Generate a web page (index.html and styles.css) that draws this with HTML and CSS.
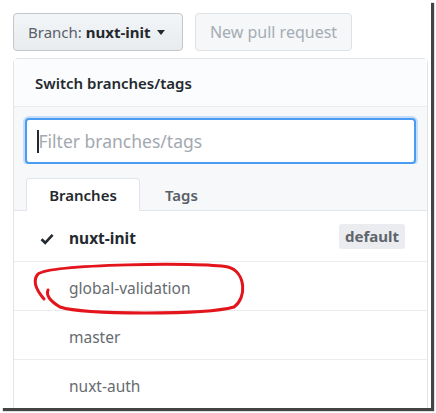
FILE: index.html
```html
<!DOCTYPE html>
<html>
<head>
<meta charset="utf-8">
<link rel="stylesheet" href="styles.css">
</head>
<body>
<div class="frame">
  <div class="toolbar">
    <button class="btn branch-btn"><span class="lbl">Branch:</span> <span class="cur">nuxt-init</span><span class="caret"></span></button>
    <button class="btn disabled">New pull request</button>
  </div>
  <div class="dropdown">
    <div class="dd-header">Switch branches/tags</div>
    <div class="dd-filter">
      <div class="input"><span class="cursor"></span><span class="ph">Filter branches/tags</span></div>
    </div>
    <div class="tabs">
      <div class="tab active">Branches</div>
      <div class="tab">Tags</div>
    </div>
    <ul class="list">
      <li class="item selected">
        <svg class="check" width="14" height="12" viewBox="0 0 14 12"><path d="M1.5 6.2 L5.2 9.8 L12.6 1.8" fill="none" stroke="#24292e" stroke-width="2.6"/></svg>
        <span class="name">nuxt-init</span>
        <span class="badge">default</span>
      </li>
      <li class="item"><span class="name">global-validation</span></li>
      <li class="item"><span class="name">master</span></li>
      <li class="item"><span class="name">nuxt-auth</span></li>
    </ul>
  </div>
  <svg class="scribble" width="436" height="413" viewBox="0 0 436 413">
    <path d="M44 299 C 38 292, 31 282, 38 274 C 52 264, 200 262, 228 267 C 246 272, 247 298, 234 307 C 205 315, 85 315, 60 307 C 50 301, 46 295, 48 290" fill="none" stroke="#e3141b" stroke-width="3" stroke-linecap="round"/>
  </svg>
</div>
</body>
</html>
```

FILE: styles.css
```css
* { box-sizing: border-box; }
html, body { margin: 0; padding: 0; background: #fff; }
body {
  font-family: "Noto Sans", "Open Sans", sans-serif;
  color: #24292e;
  width: 436px;
  height: 413px;
  overflow: hidden;
}
.frame {
  position: relative;
  width: 431px;
  height: 408px;
  padding: 13px 0 0 13px;
  box-shadow: 3px 3px 1px #444;
  overflow: hidden;
  background: #fff;
}
.toolbar {
  display: flex;
  gap: 12px;
  height: 38px;
}
.btn {
  font-family: inherit;
  font-size: 15px;
  height: 38px;
  border-radius: 4px;
  border: 1px solid #c4c7ca;
  background: linear-gradient(#f3f5f7, #e8ecef);
  padding: 0 14px;
  display: flex;
  align-items: center;
  color: #586069;
  white-space: nowrap;
}
.branch-btn { width: 170px; }
.branch-btn .lbl { color: #586069; margin-right: 4px; }
.branch-btn .cur { color: #24292e; font-weight: 700; }
.caret {
  display: inline-block;
  width: 0; height: 0;
  border-left: 4.5px solid transparent;
  border-right: 4.5px solid transparent;
  border-top: 5px solid #24292e;
  margin-left: 6px;
}
.btn.disabled {
  width: 157px;
  padding: 0;
  justify-content: center;
  font-size: 16px;
  color: #a5acb3;
  background: #f5f7f9;
  border-color: #dfe2e5;
}
.dropdown {
  margin-top: 7px;
  width: 415px;
  height: 400px;
  border: 1px solid #e1e4e8;
  border-radius: 5px 5px 0 0;
  background: #fff;
}
.dd-header {
  height: 48px;
  display: flex;
  align-items: center;
  padding-left: 21px;
  font-size: 15px;
  font-weight: 600;
  border-bottom: 1px solid #eaecef;
  background: #fbfcfd;
}
.dd-filter {
  padding: 11px 11px 0 11px;
  background: #f7f8fa;
}
.input {
  height: 46px;
  border: 2px solid #4a9bf2;
  border-radius: 4px;
  background: #fff;
  box-shadow: 0 0 0 2px #c6defa;
  display: flex;
  align-items: center;
  padding-left: 10px;
  font-size: 17.5px;
}
.cursor {
  display: inline-block;
  width: 1.5px;
  height: 23px;
  background: #24292e;
}
.ph { color: #a3a9b0; }
.tabs {
  display: flex;
  padding: 14px 0 0 12px;
  background: #f7f8fa;
  border-bottom: 1px solid #e1e4e8;
}
.tab {
  height: 33px;
  padding: 0 24px;
  display: flex;
  align-items: center;
  font-size: 15px;
  font-weight: 600;
  color: #586069;
  border: 1px solid transparent;
  border-bottom: none;
  margin-bottom: -1px;
}
.tab.active {
  width: 114px;
  justify-content: center;
  background: #fff;
  color: #24292e;
  border-color: #e1e4e8;
  border-radius: 4px 4px 0 0;
}
.list { list-style: none; margin: 0; padding: 0; }
.item {
  height: 49px;
  display: flex;
  align-items: center;
  padding: 3px 0 0 55px;
  font-size: 15.5px;
  color: #666b70;
  border-bottom: 1px solid #eaecef;
  position: relative;
}
.item.selected {
  height: 51px;
  color: #24292e;
  font-weight: 700;
}
.check { position: absolute; left: 26px; top: 22px; }
.badge {
  margin-left: auto;
  margin-right: 22px;
  margin-top: -3px;
  background: #eaecef;
  color: #5e656c;
  font-size: 15px;
  font-weight: 700;
  padding: 2px 6px;
  border-radius: 3px;
  height: 25px;
  display: flex;
  align-items: center;
}
.scribble { position: absolute; left: 0; top: 0; pointer-events: none; }
```
